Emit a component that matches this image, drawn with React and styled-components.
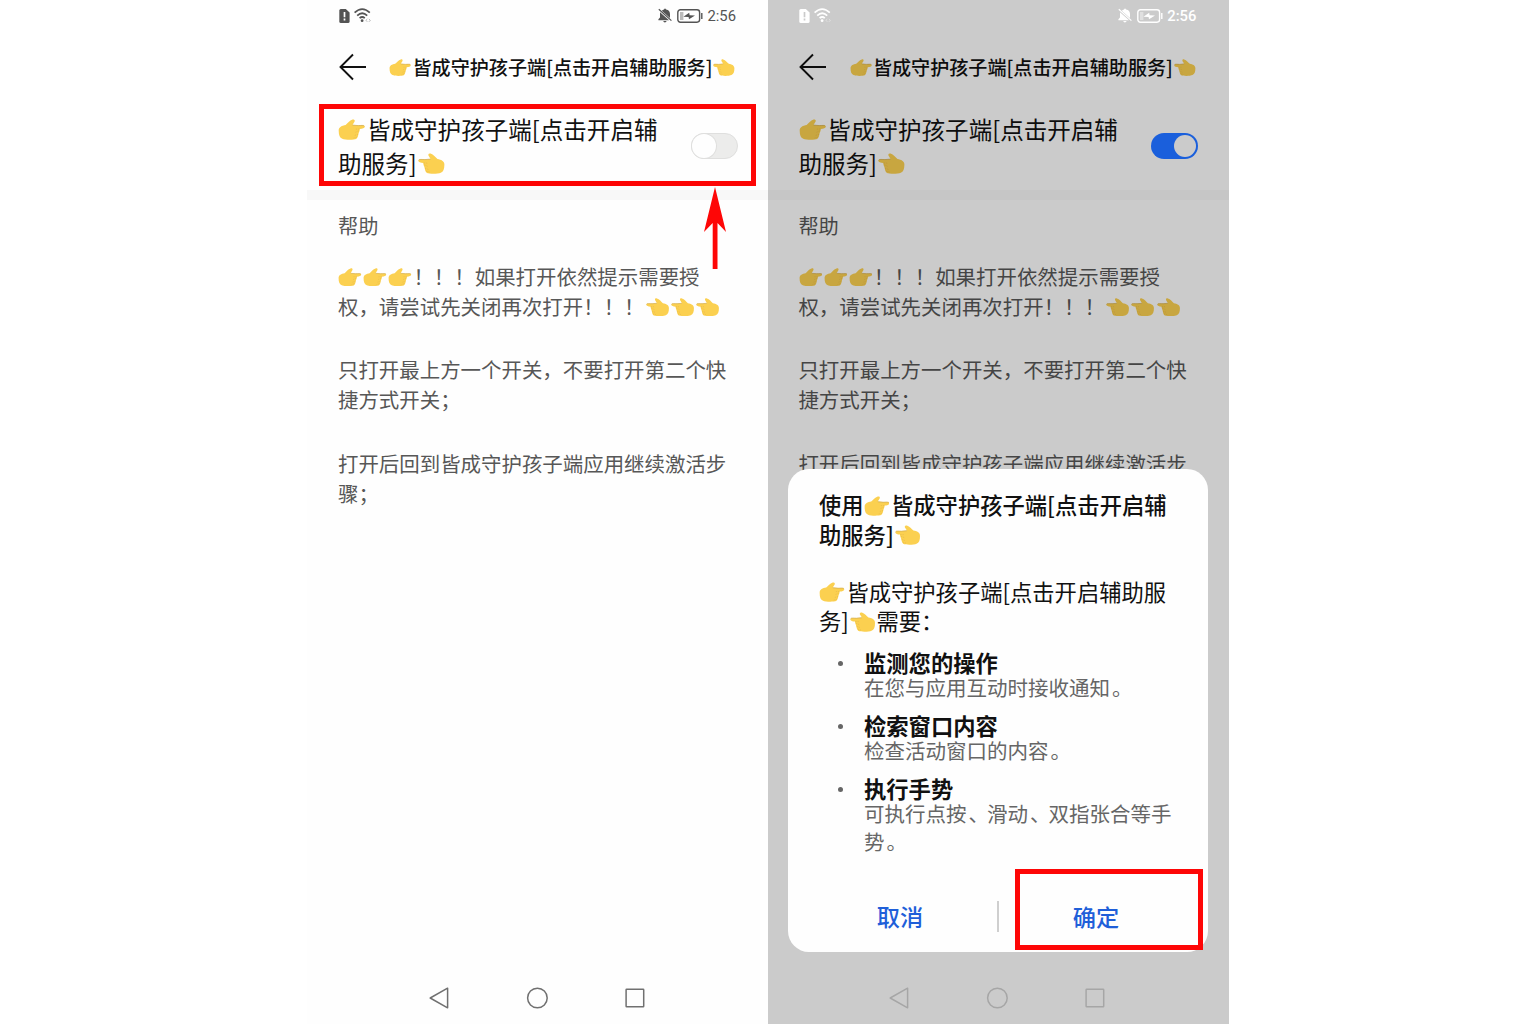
import React from "react";
import styled, { createGlobalStyle } from "styled-components";

const SERVICE_LINES = ['👉皆成守护孩子端[点击开启辅', '助服务]👈'];

const HELP = [
    ['👉👉👉！！！如果打开依然提示需要授', '权，请尝试先关闭再次打开！！！👈👈👈'],
    ['只打开最上方一个开关，不要打开第二个快', '捷方式开关；'],
    ['打开后回到皆成守护孩子端应用继续激活步', '骤；'],
];

const PERMISSIONS = [
    { name: '监测您的操作', lines: ['在您与应用互动时接收通知。'] },
    { name: '检索窗口内容', lines: ['检查活动窗口的内容。'] },
    { name: '执行手势', lines: ['可执行点按、滑动、双指张合等手', '势。'] },
];

export default function App() {
    return (
        <Page>
            <GlobalStyle/>
            <Phone>
                <ServiceScreen/>
                <ServiceHighlight/>
                <ArrowUp viewBox="0 0 24 84">
                    <path d="M12 1 L23 46 L14.5 37 V83 H9.7 V37 L1 46 Z" fill="#fe0606"/>
                </ArrowUp>
            </Phone>
            <Phone>
                <ServiceScreen on/>
                <Scrim/>
                <ConfirmDialog/>
                <ConfirmHighlight/>
            </Phone>
        </Page>
    )
}

function ServiceScreen({on}) {
    return (
        <Screen $on={on}>
            <StatusBar $light={on}>
                <StatusGroup>
                    <SimIcon mark={on ? '#cbcbcb' : '#fff'}/>
                    <WifiIcon/>
                </StatusGroup>
                <StatusGroup>
                    <BellOffIcon/>
                    <BatteryIcon/>
                    <Clock $bold={on}>2:56</Clock>
                </StatusGroup>
            </StatusBar>
            <Header>
                <BackIcon viewBox="0 0 28 28">
                    <path d="M14 1.5 L1.5 14 L14 26.5 M1.5 14 H27"/>
                </BackIcon>
                <HeaderTitle><Rich text="👉皆成守护孩子端[点击开启辅助服务]👈"/></HeaderTitle>
            </Header>
            <ServiceRow>
                <ServiceName><Lines lines={SERVICE_LINES}/></ServiceName>
                <Switch $on={on}><Knob $on={on}/></Switch>
            </ServiceRow>
            <Band/>
            <Help>
                <HelpTitle>帮助</HelpTitle>
                {HELP.map((lines, idx) => (
                    <HelpText key={idx}><Lines lines={lines}/></HelpText>
                ))}
            </Help>
            <NavBar $dim={on}>
                <svg width="22" height="24" viewBox="0 0 22 24">
                    <path d="M2.2 12 L19.6 2.2 V21.8 Z" strokeLinejoin="round"/>
                </svg>
                <svg width="24" height="24" viewBox="0 0 24 24">
                    <circle cx="12.4" cy="12" r="9.8"/>
                </svg>
                <svg width="22" height="24" viewBox="0 0 22 24">
                    <rect x="2.1" y="3.2" width="17.6" height="17.6" rx="0.6"/>
                </svg>
            </NavBar>
        </Screen>
    )
}

function ConfirmDialog() {
    return (
        <Dialog>
            <DialogTitle><Lines lines={['使用👉皆成守护孩子端[点击开启辅', '助服务]👈']}/></DialogTitle>
            <DialogIntro><Lines lines={['👉皆成守护孩子端[点击开启辅助服', '务]👈需要：']}/></DialogIntro>
            <PermissionList>
                {PERMISSIONS.map((item) => (
                    <Permission key={item.name}>
                        <Dot/>
                        <div>
                            <PermissionName>{item.name}</PermissionName>
                            <PermissionText><Lines lines={item.lines}/></PermissionText>
                        </div>
                    </Permission>
                ))}
            </PermissionList>
            <Actions>
                <ActionButton>取消</ActionButton>
                <ActionDivider/>
                <ActionButton>确定</ActionButton>
            </Actions>
        </Dialog>
    )
}

function Lines({lines}) {
    return lines.map((line) => <Line key={line}><Rich text={line}/></Line>)
}

// hands are drawn, everything else is plain text
function Rich({text}) {
    return text.split(/(👉|👈|。|、)/u).map((part, idx) => {
        if (part === '👉' || part === '👈') {
            return <Hand key={idx} left={part === '👈'}/>
        }
        if (part === '。' || part === '、') {
            return <Punct key={idx}>{part}</Punct>
        }
        return part;
    })
}

function Hand({left}) {
    return (
        <HandSvg viewBox="-1 -1 82 65" $left={left}>
            <path
            d="M1 34 C1 23 11 19 22 17 C28 12 34 3 43 0.5 C50 -1 52 5 47 10 L43 17 L60 18.5 C68 18.5 80 16 80 22 C80 27.5 73 29 65 29.5 C65 36 62 40 61 44 C60 51 58 57 54 60 C46 63 20 63 12 59 C4 56 1 48 1 34 Z"
            fill="#fbd050"/>
            <path d="M43 17.5 L60 19 C68 19 78 17 79 21" fill="none" stroke="#d3ae55" strokeWidth="2.4"/>
            <path d="M64 29.5 H52 M62 35 L50 40 M60 45 L49 49 M56 54 L46 57" fill="none" stroke="#e3b548" strokeWidth="1.8" strokeDasharray="4 3"/>
        </HandSvg>
    )
}

function SimIcon({mark}) {
    return (
        <svg width="11" height="14" viewBox="0 0 11 14">
            <path d="M1.8 0 H6.8 L10.6 3.6 V12.4 Q10.6 14 9 14 H1.8 Q0.3 14 0.3 12.4 V1.6 Q0.3 0 1.8 0 Z" fill="currentColor"/>
            <path d="M5.5 3 V8.2 M5.5 9.6 V11.4" stroke={mark} strokeWidth="1.7"/>
        </svg>
    )
}

function WifiIcon() {
    return (
        <svg width="18" height="15" viewBox="0 0 18 15">
            <g fill="none" stroke="currentColor" strokeWidth="1.7">
                <path d="M0.6 4.7 Q8.2 -2.5 15.8 4.7"/>
                <path d="M3.2 7.6 Q8.2 2.9 13.2 7.6"/>
                <path d="M5.6 10.2 Q8.2 7.8 10.8 10.2"/>
            </g>
            <circle cx="8.1" cy="12.7" r="1.4" fill="currentColor"/>
            <path d="M13.3 11 L11.9 12.4 L13.3 13.8 M14.9 11 L16.3 12.4 L14.9 13.8" fill="none" stroke="currentColor" strokeWidth="0.7" opacity="0.6"/>
        </svg>
    )
}

function BellOffIcon() {
    return (
        <svg width="15" height="15" viewBox="0 0 15 15">
            <path d="M2 4.2 L11 12.2 H0.4 V11.2 L2 9.4 Z" fill="currentColor"/>
            <path d="M3.8 2.8 Q4.8 1.7 6 1.4 Q7 -0.3 8.1 1.4 Q12 2.2 12 6 V10 Z" fill="currentColor"/>
            <path d="M5.2 13 H8.6 Q8.2 14.4 6.9 14.4 Q5.6 14.4 5.2 13 Z" fill="currentColor"/>
            <path d="M0.8 1.2 L13.4 12.6" stroke="currentColor" strokeWidth="1.2"/>
        </svg>
    )
}

function BatteryIcon() {
    return (
        <svg width="26" height="14" viewBox="0 0 26 14">
            <rect x="0.8" y="0.8" width="21.8" height="12.4" rx="2.6" fill="none" stroke="currentColor" strokeWidth="1.4"/>
            <rect x="3" y="3" width="3.4" height="8" fill="currentColor" opacity="0.4"/>
            <path d="M6.4 7.7 L12.2 3.8 L12.6 6.2 L18 6.6 L12 10.2 L11.6 7.9 Z" fill="currentColor"/>
            <path d="M24.8 4 V10" stroke="currentColor" strokeWidth="1.4"/>
        </svg>
    )
}

const GlobalStyle = createGlobalStyle`
body {
    margin: 0;
    background: #fff;
    font-family: "Noto Sans CJK SC", sans-serif;
}
* {
    box-sizing: border-box;
}
`
const Page = styled.div`
display: flex;
width: 1536px;
height: 1024px;
padding-left: 307px;
overflow: hidden;
background: #fff;
`
const Phone = styled.div`
position: relative;
width: 461px;
height: 1024px;
overflow: hidden;
background: #fefefe;
`
const Screen = styled.div`
display: flex;
flex-direction: column;
width: 462px;
height: 100%;
margin-left: ${({$on}) => $on ? '-0.6px' : '0'};
padding-right: 1px;
`
const StatusBar = styled.div`
display: flex;
justify-content: space-between;
align-items: center;
height: 31px;
padding: 0 32px 0 32px;
color: ${({$light}) => $light ? '#fff' : '#545454'};
position: relative;
z-index: ${({$light}) => $light ? 2 : 0};
`
const StatusGroup = styled.div`
display: flex;
align-items: center;
gap: 4px;
`
const Clock = styled.div`
font-family: Roboto, sans-serif;
font-size: 14.8px;
line-height: 16px;
padding-top: 1px;
font-weight: ${({$bold}) => $bold ? 500 : 400};
`
const Header = styled.div`
display: flex;
align-items: center;
height: 72px;
padding: 0 0 1px 32px;
`
const BackIcon = styled.svg`
width: 28px;
height: 28px;
margin-right: 22px;
fill: none;
stroke: #111;
stroke-width: 1.9;
`
const HeaderTitle = styled.div`
font-size: 19.1px;
line-height: 28px;
font-weight: 500;
color: #111;
white-space: nowrap;
`
const ServiceRow = styled.div`
display: flex;
justify-content: space-between;
align-items: center;
height: 87px;
padding: 0 30px 1px 31px;
`
const ServiceName = styled.div`
font-size: 23.55px;
line-height: 34.4px;
color: #111;
`
const Switch = styled.div`
display: flex;
align-items: center;
justify-content: ${({$on}) => $on ? 'flex-end' : 'flex-start'};
width: 47px;
height: 26px;
padding: ${({$on}) => $on ? '0 2px' : '0'};
border: ${({$on}) => $on ? 'none' : '1.5px solid #dfdfde'};
border-radius: 13px;
background: ${({$on}) => $on ? '#1a5fdc' : '#ececeb'};
position: relative;
z-index: ${({$on}) => $on ? 2 : 0};
`
const Knob = styled.div`
width: ${({$on}) => $on ? '22px' : '24px'};
height: ${({$on}) => $on ? '22px' : '24px'};
border-radius: 50%;
background: ${({$on}) => $on ? '#cbcbcb' : '#fefefe'};
box-shadow: ${({$on}) => $on ? 'none' : '0 0 0 1px #dfdfde'};
`
const Band = styled.div`
height: 10px;
margin-right: -1px;
background: #f8f8f8;
`
const Help = styled.div`
flex: 1;
padding: 11px 0 0 31px;
font-size: 20.45px;
line-height: 30px;
color: #575757;
`
const HelpTitle = styled.div`
margin-bottom: 19.5px;
font-size: 20.2px;
`
const HelpText = styled.div`
margin-bottom: 33.5px;
`
const Line = styled.div`
white-space: nowrap;
`
const Punct = styled.span`
margin: 0 -0.1em 0 0.1em;
`
const HandSvg = styled.svg`
width: 1.15em;
height: 0.91em;
margin: ${({$left}) => $left ? '0 0.04em 0 0.05em' : '0 0.07em 0 0.01em'};
vertical-align: -0.08em;
transform: ${({$left}) => $left ? 'scaleX(-1)' : 'none'};
`
const NavBar = styled.div`
display: flex;
justify-content: space-between;
align-items: center;
height: 51px;
padding: 0 122px 1px 121px;
fill: none;
stroke: ${({$dim}) => $dim ? '#d0d0d0' : '#707070'};
stroke-width: 1.5;
`
const ServiceHighlight = styled.div`
position: absolute;
left: 12px;
top: 104px;
width: 437px;
height: 82px;
border: 5px solid #fe0606;
`
const ArrowUp = styled.svg`
position: absolute;
left: 396px;
top: 186px;
width: 24px;
height: 84px;
`
const Scrim = styled.div`
position: absolute;
inset: 0;
background: rgba(0, 0, 0, 0.2);
z-index: 1;
`
const Dialog = styled.div`
position: absolute;
left: 20px;
top: 469px;
width: 420px;
height: 483px;
padding: 21px 15px 0 31px;
border-radius: 21px;
background: #fefefe;
z-index: 3;
`
const DialogTitle = styled.div`
font-size: 22.3px;
line-height: 29.5px;
font-weight: 500;
color: #111;
`
const DialogIntro = styled.div`
margin-top: 27.5px;
font-size: 22.3px;
line-height: 29.5px;
color: #111;
`
const PermissionList = styled.div`
margin-top: 14.5px;
`
const Permission = styled.div`
display: flex;
height: 63px;
`
const Dot = styled.div`
width: 5px;
height: 5px;
margin: 11px 21px 0 19px;
border-radius: 50%;
background: #666;
`
const PermissionName = styled.div`
font-size: 22.3px;
line-height: 24px;
font-weight: 700;
color: #111;
`
const PermissionText = styled.div`
font-size: 20.5px;
line-height: 27.5px;
color: #666;
`
const Actions = styled.div`
display: flex;
align-items: center;
height: 62px;
margin: 46.5px 0 0 -16px;
`
const ActionButton = styled.button`
flex: 1;
padding: 0 0 2px;
border: none;
background: none;
font-family: inherit;
font-size: 23.2px;
line-height: 34px;
font-weight: 500;
color: #1f5fd9;
`
const ActionDivider = styled.div`
width: 2px;
height: 31px;
background: #cfcfcf;
`
const ConfirmHighlight = styled.div`
position: absolute;
left: 247px;
top: 869px;
width: 188px;
height: 81px;
border: 5px solid #fe0606;
z-index: 4;
`
